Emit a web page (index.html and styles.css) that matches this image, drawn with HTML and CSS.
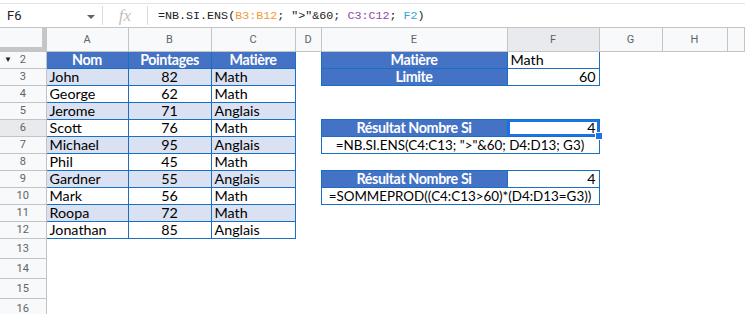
FILE: index.html
```html
<!DOCTYPE html>
<html>
<head>
    <title>NB.SI.ENS</title>
    <link rel="stylesheet" href="styles.css">
</head>
<body>
    <div class="formula-bar">
        <div class="name-box">F6</div>
        <div class="name-arrow"></div>
        <div class="bar-sep"></div>
        <div class="fx">fx</div>
        <div class="bar-sep"></div>
        <div class="formula">=NB.SI.ENS(<span class="ref-orange">B3:B12</span>; "&gt;"&amp;60; <span class="ref-purple">C3:C12</span>; <span class="ref-cyan">F2</span>)</div>
    </div>

    <table class="sheet">
        <colgroup>
            <col class="col-rh">
            <col class="col-a">
            <col class="col-b">
            <col class="col-c">
            <col class="col-d">
            <col class="col-e">
            <col class="col-f">
            <col class="col-g">
            <col class="col-h">
            <col>
        </colgroup>
        <thead>
            <tr class="head-row">
                <th class="corner"></th>
                <th>A</th>
                <th>B</th>
                <th>C</th>
                <th>D</th>
                <th>E</th>
                <th class="active">F</th>
                <th>G</th>
                <th>H</th>
                <th></th>
            </tr>
        </thead>
        <tbody>
            <tr class="row">
                <td class="rh"><span class="hidden-mark">&#9660;</span>2</td>
                <td class="tb th-blue center">Nom</td>
                <td class="tb th-blue center">Pointages</td>
                <td class="tb th-blue center">Matière</td>
                <td></td>
                <td class="tb th-blue center">Matière</td>
                <td class="tb">Math</td>
                <td></td><td></td><td></td>
            </tr>
            <tr class="row">
                <td class="rh">3</td>
                <td class="tb stripe">John</td>
                <td class="tb stripe center">82</td>
                <td class="tb stripe">Math</td>
                <td></td>
                <td class="tb th-blue center">Limite</td>
                <td class="tb right">60</td>
                <td></td><td></td><td></td>
            </tr>
            <tr class="row">
                <td class="rh">4</td>
                <td class="tb">George</td>
                <td class="tb center">62</td>
                <td class="tb">Math</td>
                <td></td><td></td><td></td><td></td><td></td><td></td>
            </tr>
            <tr class="row">
                <td class="rh">5</td>
                <td class="tb stripe">Jerome</td>
                <td class="tb stripe center">71</td>
                <td class="tb stripe">Anglais</td>
                <td></td><td></td><td></td><td></td><td></td><td></td>
            </tr>
            <tr class="row">
                <td class="rh active">6</td>
                <td class="tb">Scott</td>
                <td class="tb center">76</td>
                <td class="tb">Math</td>
                <td></td>
                <td class="tb th-blue center">Résultat Nombre Si</td>
                <td class="tb right selected">4<span class="handle"></span></td>
                <td></td><td></td><td></td>
            </tr>
            <tr class="row">
                <td class="rh">7</td>
                <td class="tb stripe">Michael</td>
                <td class="tb stripe center">95</td>
                <td class="tb stripe">Anglais</td>
                <td></td>
                <td class="tb center merged" colspan="2">=NB.SI.ENS(C4:C13; "&gt;"&amp;60; D4:D13; G3)</td>
                <td></td><td></td><td></td>
            </tr>
            <tr class="row">
                <td class="rh">8</td>
                <td class="tb">Phil</td>
                <td class="tb center">45</td>
                <td class="tb">Math</td>
                <td></td><td></td><td></td><td></td><td></td><td></td>
            </tr>
            <tr class="row">
                <td class="rh">9</td>
                <td class="tb stripe">Gardner</td>
                <td class="tb stripe center">55</td>
                <td class="tb stripe">Anglais</td>
                <td></td>
                <td class="tb th-blue center">Résultat Nombre Si</td>
                <td class="tb right">4</td>
                <td></td><td></td><td></td>
            </tr>
            <tr class="row">
                <td class="rh">10</td>
                <td class="tb">Mark</td>
                <td class="tb center">56</td>
                <td class="tb">Math</td>
                <td></td>
                <td class="tb center merged" colspan="2">=SOMMEPROD((C4:C13&gt;60)*(D4:D13=G3))</td>
                <td></td><td></td><td></td>
            </tr>
            <tr class="row">
                <td class="rh">11</td>
                <td class="tb stripe">Roopa</td>
                <td class="tb stripe center">72</td>
                <td class="tb stripe">Math</td>
                <td></td><td></td><td></td><td></td><td></td><td></td>
            </tr>
            <tr class="row">
                <td class="rh">12</td>
                <td class="tb">Jonathan</td>
                <td class="tb center">85</td>
                <td class="tb">Anglais</td>
                <td></td><td></td><td></td><td></td><td></td><td></td>
            </tr>
            <tr class="row tall">
                <td class="rh">13</td>
                <td></td><td></td><td></td><td></td><td></td><td></td><td></td><td></td><td></td>
            </tr>
            <tr class="row tall">
                <td class="rh">14</td>
                <td></td><td></td><td></td><td></td><td></td><td></td><td></td><td></td><td></td>
            </tr>
            <tr class="row tall">
                <td class="rh">15</td>
                <td></td><td></td><td></td><td></td><td></td><td></td><td></td><td></td><td></td>
            </tr>
            <tr class="row tall">
                <td class="rh">16</td>
                <td></td><td></td><td></td><td></td><td></td><td></td><td></td><td></td><td></td>
            </tr>
        </tbody>
    </table>
</body>
</html>
```

FILE: styles.css
```css
body {
    margin: 0;
    background-color: white;
    font-family: Lato, "Liberation Sans", sans-serif;
    overflow: hidden;
}

/* Formula bar */
.formula-bar {
    display: flex;
    align-items: center;
    height: 23px;
    margin-top: 3px;
    border-top: 1px solid #e3e3e3;
    border-bottom: 1px solid #c4c4c4;
}

.name-box {
    width: 80px;
    padding-left: 7px;
    font-family: Roboto, sans-serif;
    font-size: 13px;
    color: #202124;
}

.name-arrow {
    width: 0;
    height: 0;
    border-left: 4px solid transparent;
    border-right: 4px solid transparent;
    border-top: 4px solid #5f6368;
    margin-top: 2px;
    margin-right: 7px;
}

.bar-sep {
    width: 1px;
    height: 19px;
    background-color: #dadce0;
}

.fx {
    width: 44px;
    text-align: center;
    font-family: "Liberation Serif", serif;
    font-style: italic;
    font-size: 17px;
    color: #c0c0c0;
}

.formula {
    padding-left: 10px;
    font-family: "Liberation Mono", monospace;
    font-size: 11.7px;
    color: #202124;
    white-space: nowrap;
}

.ref-orange { color: #f29a3a; }
.ref-purple { color: #8e4aa8; }
.ref-cyan { color: #2ea7d6; }

/* Grid */
.sheet {
    width: 100%;
    table-layout: fixed;
    border-collapse: collapse;
}

.col-rh { width: 46px; }
.col-a { width: 82px; }
.col-b { width: 83px; }
.col-c { width: 84px; }
.col-d { width: 26px; }
.col-e { width: 186px; }
.col-f { width: 92px; }
.col-g { width: 63px; }
.col-h { width: 65px; }

.head-row th {
    height: 23px;
    padding: 0;
    background-color: #f8f9fa;
    border-right: 1px solid #c4c4c4;
    border-bottom: 1px solid #c4c4c4;
    font-family: Roboto, sans-serif;
    font-weight: normal;
    font-size: 11px;
    color: #5f6368;
    text-align: center;
}

.head-row th.active {
    background-color: #e8eaed;
}

.head-row th.corner {
    box-shadow: inset -4px -4px 0 #c4c7c5;
}

.row td {
    height: 16px;
    padding: 0 3px;
    font-size: 14.3px;
    line-height: 16px;
    color: #000;
    white-space: nowrap;
    overflow: hidden;
}

.row.tall td {
    height: 19px;
}

.row td.rh {
    position: relative;
    padding: 0;
    background-color: #f8f9fa;
    border-right: 1px solid #c4c4c4;
    border-bottom: 1px solid #c4c4c4;
    font-family: Roboto, sans-serif;
    font-size: 11px;
    color: #5f6368;
    text-align: center;
}

.row td.rh.active {
    background-color: #e8eaed;
}

.hidden-mark {
    position: absolute;
    left: 4px;
    top: 0;
    font-size: 8px;
    color: #202124;
}

.tb {
    border: 1px solid #1b6fc2;
}

.th-blue {
    background-color: #4472c4;
    color: white !important;
    font-weight: bold;
    letter-spacing: -0.4px;
}

.stripe {
    background-color: #d9e1f2;
}

.center { text-align: center; }
.right { text-align: right; }

.row td.merged {
    font-size: 13.4px;
}

.row td.selected {
    position: relative;
    overflow: visible;
    box-shadow: inset 0 0 0 2px #1a73e8;
}

.handle {
    position: absolute;
    right: -4px;
    bottom: -4px;
    width: 6px;
    height: 6px;
    background-color: #1a73e8;
    border: 1px solid white;
}
```
